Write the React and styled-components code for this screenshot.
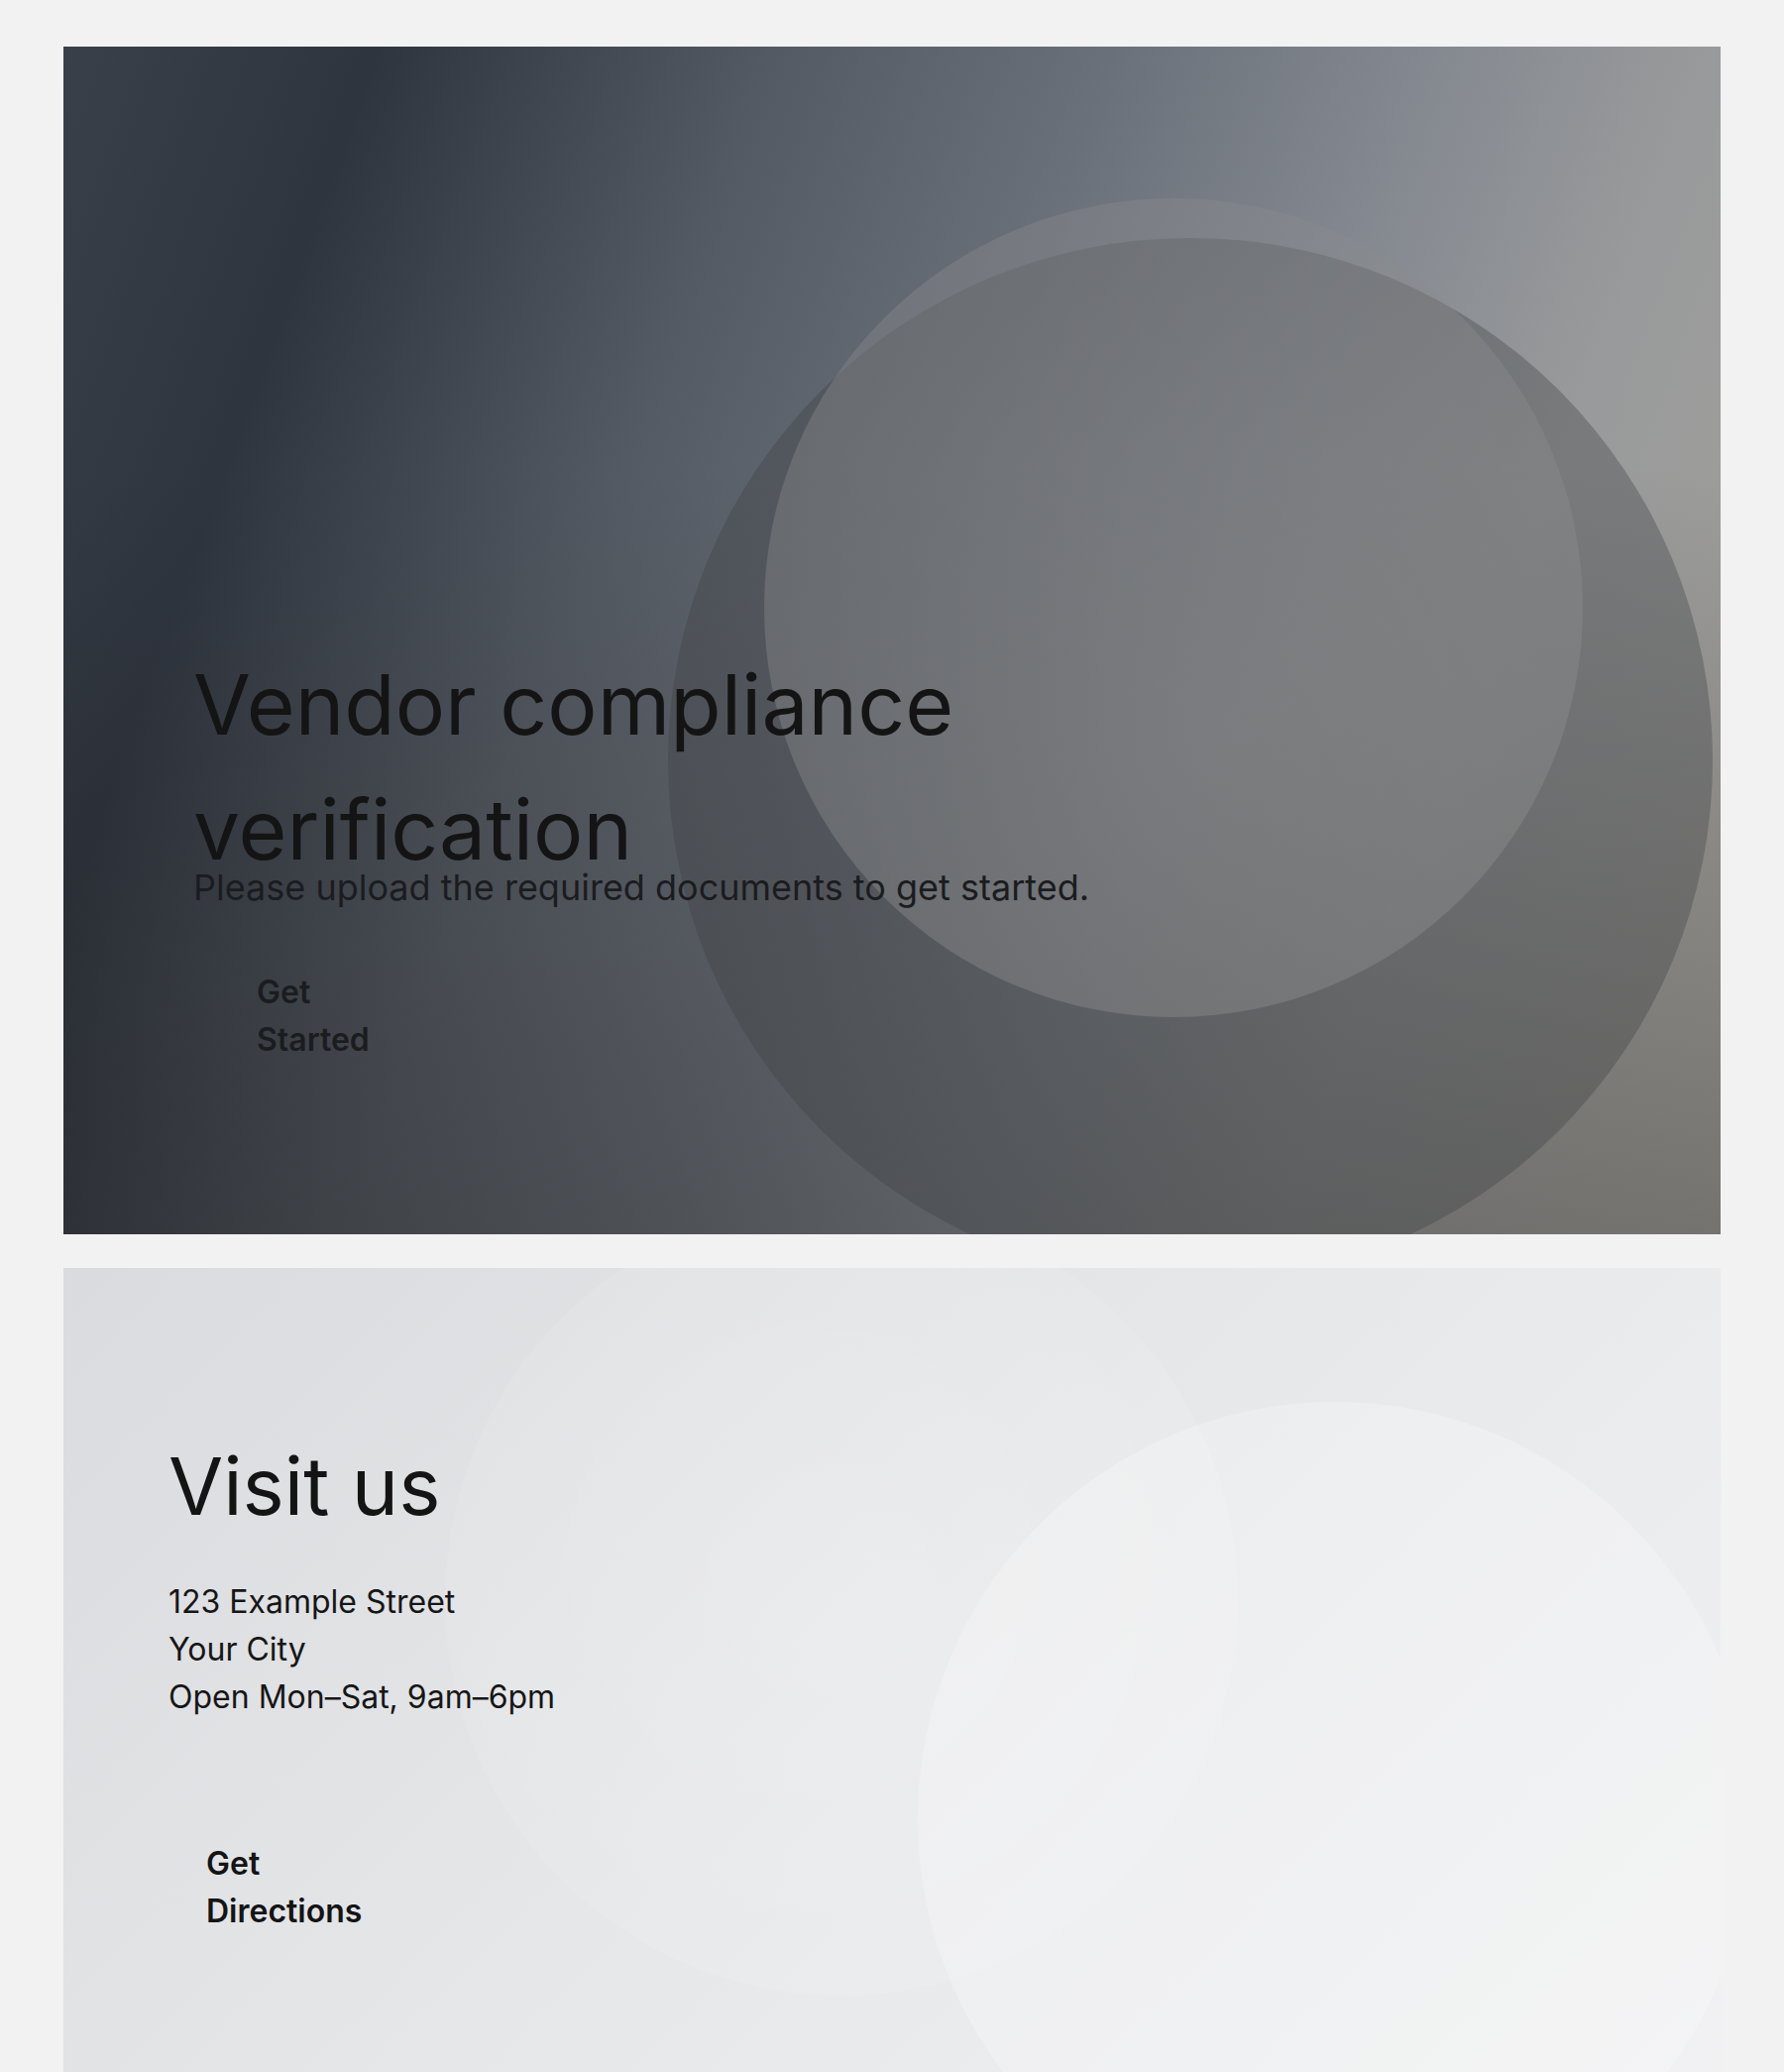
import React from 'react';
import styled, { createGlobalStyle } from 'styled-components';

const GlobalStyle = createGlobalStyle`
  * {
    box-sizing: border-box;
  }

  body {
    margin: 0;
    background: #f2f2f2;
    font-family: Inter, "Noto Sans", "Liberation Sans", sans-serif;
    color: #141414;
  }
`;

const Page = styled.main`
  display: flex;
  flex-direction: column;
  gap: 34px;
  padding: 47px 64px;
`;

const Panel = styled.section`
  position: relative;
  overflow: hidden;
  height: 1198px;
  display: flex;
  flex-direction: column;
  align-items: flex-start;
`;

const HeroPanel = styled(Panel)`
  padding: 601px 131px 0;
  background:
    linear-gradient(180deg, rgba(0, 0, 0, 0) 35%, rgba(20, 18, 15, 0.32) 100%),
    linear-gradient(
      110deg,
      #394049 0%,
      #2f353f 15%,
      #545a63 34%,
      #6a7079 50%,
      #838890 65%,
      #999a9b 79%,
      #a3a19c 100%
    );
`;

const VisitPanel = styled(Panel)`
  padding: 172px 106px 0;
  background: linear-gradient(135deg, #dadbde 0%, #e7e8ea 45%, #f4f4f5 100%);
`;

// decorative discs behind the text
const Disc = styled.div`
  position: absolute;
  left: ${(p) => p.$x}px;
  top: ${(p) => p.$y}px;
  width: ${(p) => p.$size}px;
  height: ${(p) => p.$size}px;
  border-radius: 50%;
  background: ${(p) => p.$fill};
  pointer-events: none;
`;

const Content = styled.div`
  position: relative;
  z-index: 1;
  display: flex;
  flex-direction: column;
  align-items: flex-start;
`;

const HeroTitle = styled.h1`
  margin: 0;
  max-width: 900px;
  font-size: 84px;
  font-weight: 400;
  line-height: 126px;
  color: #141414;
`;

const HeroText = styled.p`
  margin: -29px 0 0;
  font-size: 36px;
  line-height: 48px;
  color: #1b1c1f;
`;

const SectionTitle = styled.h2`
  margin: 0;
  font-size: 80px;
  font-weight: 400;
  line-height: 96px;
  color: #141414;
`;

const Address = styled.p`
  margin: 45px 0 0;
  font-size: 32px;
  line-height: 48px;
  color: #161616;
`;

const GhostButton = styled.button`
  width: min-content;
  margin-top: ${(p) => p.$gap}px;
  padding: 0 ${(p) => p.$pad}px;
  border: 0;
  background: transparent;
  font-family: inherit;
  font-size: 32px;
  font-weight: 600;
  line-height: 48px;
  text-align: left;
  color: ${(p) => p.$color};
  cursor: pointer;
`;

export default function App() {
  return (
    <>
      <GlobalStyle />
      <Page>
        <HeroPanel>
          <Disc $x={610} $y={193} $size={1054} $fill="rgba(60, 62, 66, 0.35)" />
          <Disc
            $x={707}
            $y={153}
            $size={826}
            $fill="radial-gradient(circle at 55% 66%, rgba(150, 150, 150, 0.46), rgba(138, 138, 140, 0.4) 70%)"
          />
          <Content>
            <HeroTitle>Vendor compliance verification</HeroTitle>
            <HeroText>Please upload the required documents to get started.</HeroText>
            <GhostButton $gap={58} $pad={64} $color="#1b1c1f">
              Get Started
            </GhostButton>
          </Content>
        </HeroPanel>

        <VisitPanel>
          <Disc
            $x={385}
            $y={-66}
            $size={800}
            $fill="radial-gradient(circle at 50% 50%, rgba(255, 255, 255, 0.22), rgba(255, 255, 255, 0.08) 75%)"
          />
          <Disc $x={862} $y={135} $size={842} $fill="rgba(255, 255, 255, 0.24)" />
          <Content>
            <SectionTitle>Visit us</SectionTitle>
            <Address>
              123 Example Street
              <br />
              Your City
              <br />
              Open Mon–Sat, 9am–6pm
            </Address>
            <GhostButton $gap={120} $pad={38} $color="#141414">
              Get Directions
            </GhostButton>
          </Content>
        </VisitPanel>
      </Page>
    </>
  );
}
